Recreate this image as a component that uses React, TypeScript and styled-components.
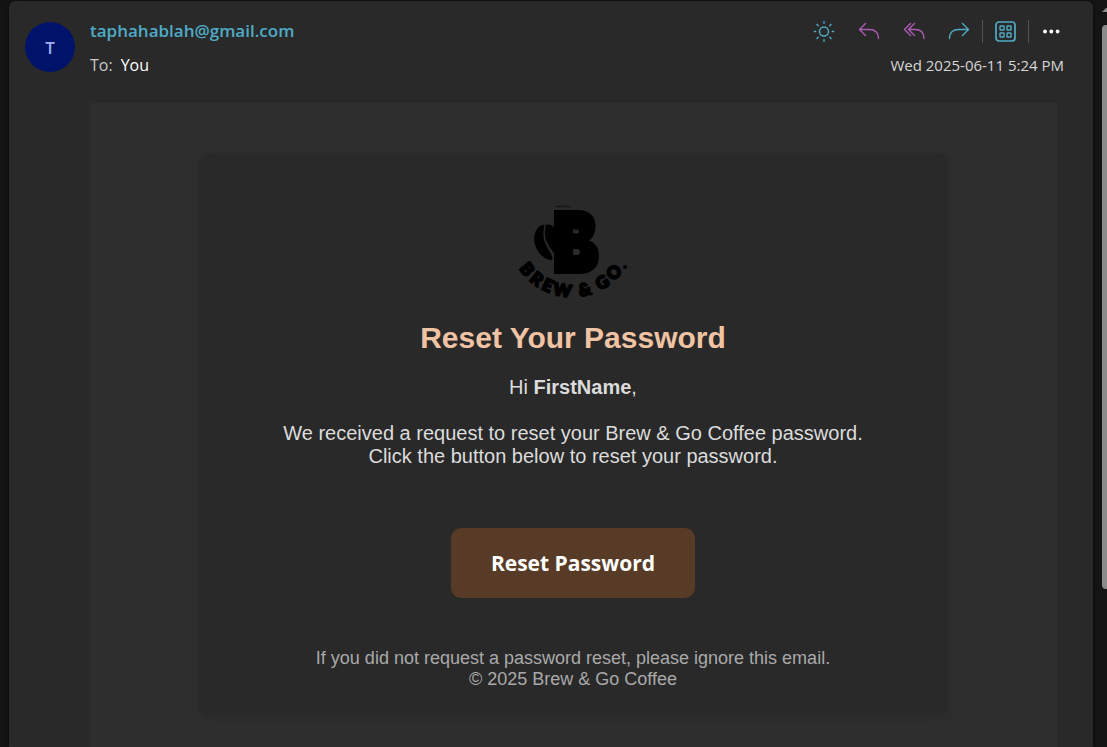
import React from "react";
import styled, { createGlobalStyle } from "styled-components";

const ui = `"Segoe UI", "Open Sans", "Noto Sans", sans-serif`;
const mail = `Arial, "Liberation Sans", sans-serif`;

const GlobalStyle = createGlobalStyle`
  * { box-sizing: border-box; }
  body { margin: 0; background: #141414; font-family: ${ui}; color: #d6d6d6; }
  h1, p { margin: 0; }
`;

const Page = styled.div`
  display: flex;
  min-height: 100vh;
  padding: 1px 0 0 9px;
`;

const Message = styled.main`
  flex: 1;
  display: flex;
  flex-direction: column;
  margin-right: 9px;
  background: #292929;
  border-radius: 6px 6px 0 0;
  box-shadow: 0 0 3px #0a0a0a;
`;

const Header = styled.header`
  display: flex;
  height: 102px;
  padding: 13px 19px 0 16px;
`;

const Avatar = styled.div`
  display: flex;
  align-items: center;
  justify-content: center;
  width: 50px;
  height: 50px;
  margin: 8px 15px 0 0;
  border-radius: 50%;
  background: #00136a;
  color: #9fb0ee;
  font-size: 17px;
  font-weight: 600;
`;

const Sender = styled.div`
  flex: 1;
  min-width: 0;
`;

const Address = styled.a`
  display: block;
  color: #4fabc5;
  font-size: 17px;
  font-weight: 600;
  line-height: 34px;
  text-decoration: none;
`;

const Recipient = styled.p`
  display: flex;
  gap: 8px;
  font-size: 16px;
  line-height: 34px;
  color: #c8c8c8;
`;

const You = styled.span`
  color: #ffffff;
`;

const Side = styled.div`
  display: flex;
  flex-direction: column;
  align-items: flex-end;
`;

const Toolbar = styled.div`
  display: flex;
  align-items: center;
  height: 34px;
`;

const Action = styled.button<{ $tone: string }>`
  display: flex;
  align-items: center;
  justify-content: center;
  width: 45px;
  height: 34px;
  padding: 0 1px 0 0;
  border: 0;
  background: transparent;
  color: ${(p) => p.$tone};
`;

const Divider = styled.span`
  width: 1px;
  height: 23px;
  background: #525252;
`;

const Sent = styled.time`
  padding-right: 10px;
  font-size: 15px;
  line-height: 34px;
  color: #d6d6d6;
`;

const Body = styled.section`
  flex: 1;
  margin: 0 36px 0 81px;
  padding: 50px 21px 30px 20px;
  background: #2e2e2e;
  font-family: ${mail};
`;

const Card = styled.article`
  display: flex;
  flex-direction: column;
  align-items: center;
  max-width: 750px;
  margin: 0 auto;
  padding: 50px 40px 27px;
  border-radius: 12px;
  background: #292929;
  box-shadow: 0 2px 10px rgba(0, 0, 0, 0.08);
  text-align: center;
`;

const Title = styled.h1`
  margin-top: 17px;
  color: #efc3a4;
  font-size: 30px;
  line-height: 36px;
`;

const Text = styled.p<{ $gap: number }>`
  margin-top: ${(p) => p.$gap}px;
  font-size: 20px;
  line-height: 23px;
  color: #dcdcdc;
`;

const ResetButton = styled.button`
  height: 70px;
  margin: 60px 0 50px;
  padding: 0 40px;
  border: 0;
  border-radius: 10px;
  background: #573b26;
  color: #ffffff;
  font-family: ${ui};
  font-size: 21px;
  font-weight: 700;
`;

const Footnote = styled.p`
  font-size: 18px;
  line-height: 21px;
  color: #a9a9a9;
`;

const ScrollTrack = styled.div`
  width: 5px;
  overflow: hidden;
`;

const ScrollArrow = styled.svg`
  display: block;
  margin: 7px 0 13px;
`;

const ScrollThumb = styled.div`
  width: 10px;
  height: 564px;
  border-radius: 4px;
  background: #8b8b8b;
`;

const Icon = ({ children }: { children: React.ReactNode }) => (
  <svg width="22" height="22" viewBox="0 0 22 22" fill="none" stroke="currentColor" strokeWidth="1.4" strokeLinecap="round" strokeLinejoin="round" aria-hidden="true">
    {children}
  </svg>
);

// Each letter of the wordmark and the distance of its centre along the arc.
const wordmark: [string, number][] = [
  ["B", 42],
  ["R", 57],
  ["E", 71],
  ["W", 88],
  ["&", 113],
  ["G", 134],
  ["O", 151],
];

const Logo = () => (
  <svg width="130" height="100" viewBox="-2 1 130 100" role="img" aria-label="Brew &amp; Go">
    <defs>
      <path id="arc" d="M-1 32A63 63 0 0 0 125 32" />
    </defs>
    <path d="M46 4.500h15" stroke="#000" strokeWidth="1.500" strokeDasharray="2 .8" opacity=".55" />
    <path
      fillRule="evenodd"
      d="M44 8H68C79 8 85.500 14 85.500 24C85.500 31 83 35.500 79 38.500C85.500 41 89 46 89 54C89 66 81 72 69 72H44ZM63 27.500V31.500H67.500Q69 31.500 69 29.500Q69 27.500 67.500 27.500ZM63 47V53H67.500Q70 53 70 50Q70 47 67.500 47Z"
    />
    <path d="M34.500 22.500C27 23.500 23.500 31 24.300 39C25 48 33 57.500 41 58C43 58 43 56 41.500 53C38 46 33 40 33.500 32C33.500 28 34 25 34.500 22.500Z" />
    <path d="M36 22.500C41 22 44 24 45 27V53C41 46 35 41 35 32C35 28 35 25 36 22.500Z" />
    <g fontFamily="Lato, sans-serif" fontWeight="900" fontSize="17" textAnchor="middle" stroke="#000" strokeWidth="2" strokeLinejoin="round">
      {wordmark.map(([letter, offset]) => (
        <text key={letter}>
          <textPath href="#arc" startOffset={offset}>
            {letter}
          </textPath>
        </text>
      ))}
    </g>
    <circle cx="115" cy="65" r="2" />
  </svg>
);

const teal = "#4fabc5";
const purple = "#ad5bb5";

export default function App() {
  return (
    <>
      <GlobalStyle />
      <Page>
        <Message>
          <Header>
            <Avatar>T</Avatar>
            <Sender>
              <Address href="mailto:taphahablah@gmail.com">taphahablah@gmail.com</Address>
              <Recipient>
                To: <You>You</You>
              </Recipient>
            </Sender>
            <Side>
              <Toolbar>
                <Action $tone={teal} aria-label="Light mode">
                  <Icon>
                    <circle cx="11" cy="11.500" r="4.500" />
                    <path d="M11 1.800v1.400M11 19.800v1.400M1.300 11.500h1.400M19.300 11.500h1.400M4 4.500l1.200 1.200M16.800 17.300l1.200 1.200M18 4.500l-1.200 1.200M5.200 17.300l-1.200 1.200" />
                  </Icon>
                </Action>
                <Action $tone={purple} aria-label="Reply">
                  <Icon>
                    <path d="M7.500 3.500l-6 6 6 6M1.500 9.500H11q9.500 0 9.500 9" />
                  </Icon>
                </Action>
                <Action $tone={purple} aria-label="Reply all">
                  <Icon>
                    <path d="M7.500 3.500l-6 6 6 6M11.500 3.500l-6 6 6 6M5.500 9.500H12q9 0 9 9" />
                  </Icon>
                </Action>
                <Action $tone={teal} aria-label="Forward">
                  <Icon>
                    <path d="M14.500 3.500l6 6-6 6M20.500 9.500H11q-9.500 0-9.500 9" />
                  </Icon>
                </Action>
                <Divider />
                <Action $tone={teal} aria-label="Apps">
                  <Icon>
                    <rect x="2" y="2" width="19" height="19" rx="3" strokeWidth="1.700" />
                    <rect x="6" y="6" width="4" height="4" rx=".5" />
                    <rect x="13" y="6" width="4" height="4" rx=".5" />
                    <rect x="6" y="13" width="4" height="4" rx=".5" />
                    <rect x="13" y="13" width="4" height="4" rx=".5" />
                  </Icon>
                </Action>
                <Divider />
                <Action $tone="#ffffff" aria-label="More actions">
                  <Icon>
                    <g fill="currentColor" stroke="none">
                      <circle cx="5" cy="11.500" r="1.900" />
                      <circle cx="11.300" cy="11.500" r="1.900" />
                      <circle cx="17.600" cy="11.500" r="1.900" />
                    </g>
                  </Icon>
                </Action>
              </Toolbar>
              <Sent dateTime="2025-06-11T17:24">Wed 2025-06-11 5:24 PM</Sent>
            </Side>
          </Header>
          <Body>
            <Card>
              <Logo />
              <Title>Reset Your Password</Title>
              <Text $gap={20}>
                Hi <strong>FirstName</strong>,
              </Text>
              <Text $gap={23}>
                We received a request to reset your Brew &amp; Go Coffee password.
                <br />
                Click the button below to reset your password.
              </Text>
              <ResetButton>Reset Password</ResetButton>
              <Footnote>
                If you did not request a password reset, please ignore this email.
                <br />© 2025 Brew &amp; Go Coffee
              </Footnote>
            </Card>
          </Body>
        </Message>
        <ScrollTrack aria-hidden="true">
          <ScrollArrow width="10" height="4" viewBox="0 0 10 4">
            <path d="M0 4L4 0h2l4 4z" fill="#8b8b8b" />
          </ScrollArrow>
          <ScrollThumb />
        </ScrollTrack>
      </Page>
    </>
  );
}
